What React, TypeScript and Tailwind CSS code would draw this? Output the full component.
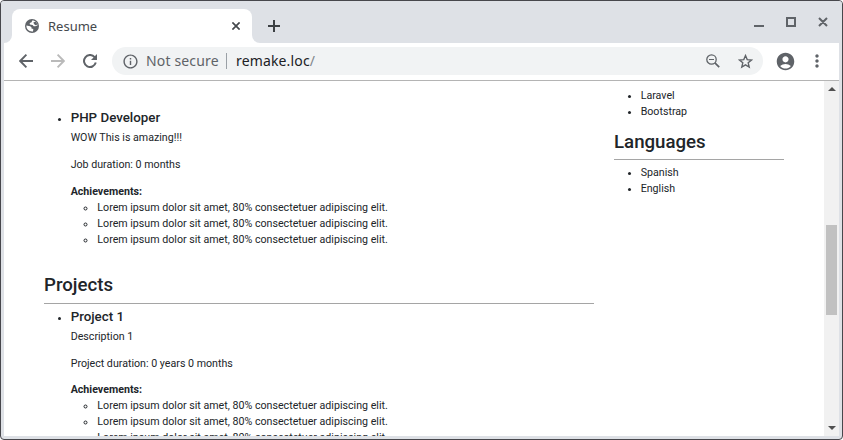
import React from "react";
import { MdAccountCircle, MdInfoOutline, MdMoreVert } from "react-icons/md";

const lorem = "Lorem ipsum dolor sit amet, 80% consectetuer adipiscing elit.";

function Globe() {
  return (
    <svg className="h-[14px] w-[14px]" viewBox="0 0 14 14">
      <circle cx="7" cy="7" r="7" fill="#5f6368" />
      <path
        d="M7.2 1.5L6.6 3.2L4.7 4.1L4.9 5.6L7.6 5.9L8.7 7.2L10.4 7.3L12.6 6.3C12.4 3.7 10.2 1.4 7.2 1.5Z"
        fill="#fff"
      />
      <path d="M1.4 6.5L5.2 7.2L6.6 8.5L6.4 9.6L8.3 10.1L8 12.4C4.6 13 1.2 10.3 1.4 6.5Z" fill="#fff" />
      <path d="M8.3 3.4L10.6 2.6L12.6 5.6L10.6 6.2L9.2 5.2Z" fill="#5f6368" />
    </svg>
  );
}

function Arrow({ className }: { className: string }) {
  return (
    <svg className={className} viewBox="0 0 14 14" fill="none" stroke="currentColor" strokeWidth="1.9">
      <path d="M14 7H1.5M7.4 0.7L1.2 7L7.4 13.3" />
    </svg>
  );
}

function TitleBar() {
  return (
    <div className="flex h-[42px] shrink-0 items-end bg-[#dee1e6] pl-[3px] text-[#5f6368]">
      <div className="h-2 w-2 bg-white">
        <div className="h-2 w-2 rounded-br-lg bg-[#dee1e6]" />
      </div>
      <div className="flex h-[34px] w-[240px] items-center rounded-t-lg bg-white pl-[13px] pr-3">
        <Globe />
        <span className="ml-[9px] flex-1 text-[13px] leading-[18px] text-[#45494d]">Resume</span>
        <svg className="h-2 w-2" viewBox="0 0 8 8" fill="none" stroke="#45494d" strokeWidth="1.7">
          <path d="M0.4 0.4L7.6 7.6M7.6 0.4L0.4 7.6" />
        </svg>
      </div>
      <div className="h-2 w-2 bg-white">
        <div className="h-2 w-2 rounded-bl-lg bg-[#dee1e6]" />
      </div>
      <svg className="mb-[11px] ml-2 h-3 w-3" viewBox="0 0 12 12" fill="none" stroke="#3c4043" strokeWidth="2">
        <path d="M6 0V12M0 6H12" />
      </svg>
      <svg className="mb-[15px] ml-auto mr-[13px] h-3 w-[75px]" viewBox="0 0 75 12" fill="none" stroke="#5f6368" strokeWidth="2">
        <path d="M0 10H10M33 2H41V10H33ZM65 2L73 10M73 2L65 10" />
      </svg>
    </div>
  );
}

function Toolbar() {
  return (
    <div className="flex h-[38px] shrink-0 items-center border-b border-[#b4b4b4] bg-white pb-px pl-[15px] pr-[12px] text-[#5f6368]">
      <Arrow className="h-[14px] w-[14px] shrink-0" />
      <Arrow className="ml-[18px] h-[14px] w-[14px] shrink-0 rotate-180 text-[#bababa]" />
      <svg className="ml-[18px] h-[14px] w-[14px] shrink-0" viewBox="0 0 14 14" fill="none">
        <path d="M11.6 3.1A6 6 0 1 0 12.8 8.6" stroke="currentColor" strokeWidth="2" />
        <path d="M14 0V6H8Z" fill="currentColor" />
      </svg>
      <div className="ml-[15px] flex h-7 w-[651px] shrink-0 items-center rounded-full bg-[#f1f3f4] pl-[10px] pr-[10px] text-[14px] leading-5 tracking-[0.15px]">
        <MdInfoOutline size={17} className="shrink-0" />
        <span className="ml-[7px] w-[73px] whitespace-nowrap">Not secure</span>
        <span className="ml-[7px] h-4 w-px bg-[#9aa0a6]" />
        <span className="ml-[9px] flex-1 text-[#202124]">
          remake.loc<span className="text-[#80868b]">/</span>
        </span>
        <svg className="h-[14px] w-[14px]" viewBox="0 0 14 14" fill="none" stroke="currentColor">
          <circle cx="5.5" cy="5.5" r="4.7" strokeWidth="1.3" />
          <path d="M3 5.5H8" strokeWidth="1" />
          <path d="M8.9 8.9L13.2 13.2" strokeWidth="1.7" />
        </svg>
        <svg className="ml-[17.5px] mr-[0.5px] h-[15px] w-[15px]" viewBox="0 0 15 15" fill="none" stroke="currentColor" strokeWidth="1.4">
          <path d="M7.5 1.6L9.2 5.6L13.5 6L10.2 8.8L11.2 13L7.5 10.8L3.8 13L4.8 8.8L1.5 6L5.8 5.6Z" />
        </svg>
      </div>
      <MdAccountCircle size={21} className="ml-[11.5px] shrink-0" />
      <MdMoreVert size={20} className="ml-[11.5px] shrink-0" />
    </div>
  );
}

function Entry({ title, description, duration }: { title: string; description: string; duration: string }) {
  return (
    <ul className="list-disc pl-[26.67px]">
      <li>
        <h5 className="mb-1 text-[13.33px] font-medium leading-4">{title}</h5>
        <p className="mb-[11px]">{description}</p>
        <p className="mb-[10.5px]">{duration}</p>
        <b className="block font-bold">Achievements:</b>
        <ul className="list-[circle] pl-[26.67px]">
          <li>{lorem}</li>
          <li>{lorem}</li>
          <li>{lorem}</li>
        </ul>
      </li>
    </ul>
  );
}

function Page() {
  return (
    <div className="flex min-h-0 flex-1 bg-white font-['Roboto',sans-serif] text-[10.67px] leading-4 text-[#212529]">
      <div className="flex min-w-0 flex-1 gap-5 overflow-hidden pl-10">
        <main className="w-[550px] shrink-0 pt-[29.1px]">
          <Entry title="PHP Developer" description="WOW This is amazing!!!" duration="Job duration: 0 months" />
          <section className="mt-[26.4px]">
            <h3 className="h-[30px] border-b border-[#a5a5a5] text-[18.67px] font-medium leading-[22px]">Projects</h3>
            <div className="pt-[4.6px]">
              <Entry title="Project 1" description="Description 1" duration="Project duration: 0 years 0 months" />
            </div>
          </section>
        </main>
        <aside className="w-[170px] shrink-0 pt-[7px]">
          <ul className="mb-[11px] list-disc pl-[26.67px]">
            <li>Laravel</li>
            <li>Bootstrap</li>
          </ul>
          <h3 className="h-[29px] border-b border-[#a5a5a5] text-[18.67px] font-medium leading-[22px]">Languages</h3>
          <ul className="list-disc pl-[26.67px] pt-[5px]">
            <li>Spanish</li>
            <li>English</li>
          </ul>
        </aside>
      </div>
      <div className="flex w-[15px] shrink-0 flex-col items-center bg-[#f1f1f1]">
        <svg className="mt-[6px] h-1 w-2" viewBox="0 0 8 4" fill="#505050">
          <path d="M0 4L4 0L8 4Z" />
        </svg>
        <div className="mt-[134px] h-[90px] w-[11px] bg-[#c1c1c1]" />
        <svg className="mb-[6px] mt-auto h-1 w-2" viewBox="0 0 8 4" fill="#505050">
          <path d="M0 0H8L4 4Z" />
        </svg>
      </div>
    </div>
  );
}

export default function App() {
  return (
    <div className="h-[440px] w-[843px] bg-white font-['Noto_Sans',sans-serif]">
      <div className="flex h-full flex-col overflow-hidden rounded-[4px] border border-[#47474c] bg-[#dee1e6]">
        <TitleBar />
        <div className="flex min-h-0 flex-1 flex-col px-[3px] pb-[3px]">
          <Toolbar />
          <Page />
        </div>
      </div>
    </div>
  );
}
